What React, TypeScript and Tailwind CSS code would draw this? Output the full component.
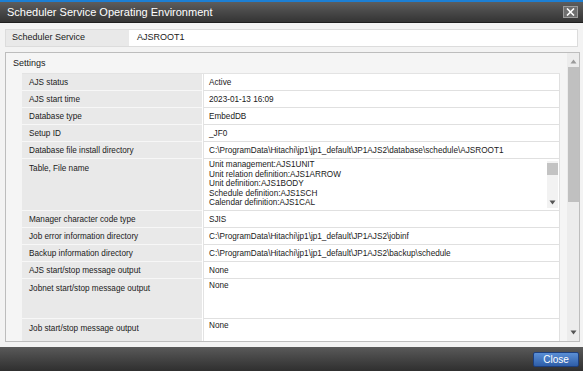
import React from 'react';

type Row = { label: string; value?: string; h: string; kind?: 'list' | 'tall' };

const rows: Row[] = [
  { label: 'AJS status', value: 'Active', h: 'h-[17px]' },
  { label: 'AJS start time', value: '2023-01-13 16:09', h: 'h-[17px]' },
  { label: 'Database type', value: 'EmbedDB', h: 'h-[17px]' },
  { label: 'Setup ID', value: '_JF0', h: 'h-[17px]' },
  {
    label: 'Database file install directory',
    value: 'C:\\ProgramData\\Hitachi\\jp1\\jp1_default\\JP1AJS2\\database\\schedule\\AJSROOT1',
    h: 'h-[17px]',
  },
  { label: 'Table, File name', h: 'h-[52px]', kind: 'list' },
  { label: 'Manager character code type', value: 'SJIS', h: 'h-[17px]' },
  {
    label: 'Job error information directory',
    value: 'C:\\ProgramData\\Hitachi\\jp1\\jp1_default\\JP1AJS2\\jobinf',
    h: 'h-[17px]',
  },
  {
    label: 'Backup information directory',
    value: 'C:\\ProgramData\\Hitachi\\jp1\\jp1_default\\JP1AJS2\\backup\\schedule',
    h: 'h-[17px]',
  },
  { label: 'AJS start/stop message output', value: 'None', h: 'h-[17px]' },
  { label: 'Jobnet start/stop message output', value: 'None', h: 'h-[40px]', kind: 'tall' },
  { label: 'Job start/stop message output', value: 'None', h: 'h-[40px]', kind: 'tall' },
];

const tableFiles = [
  'Unit management:AJS1UNIT',
  'Unit relation definition:AJS1ARROW',
  'Unit definition:AJS1BODY',
  'Schedule definition:AJS1SCH',
  'Calendar definition:AJS1CAL',
];

const Arrow = ({ up }: { up?: boolean }) => (
  <svg width="7" height="5" viewBox="0 0 7 5" className="shrink-0">
    {up ? <path d="M0.5 4.5 L3.5 0.5 L6.5 4.5 Z" fill="#9a9a9a" /> : <path d="M0.5 0.5 L3.5 4.5 L6.5 0.5 Z" fill="#555" />}
  </svg>
);

export default function App() {
  return (
    <div
      className="w-[583px] h-[371px] overflow-hidden flex flex-col bg-[#f3f3f3] text-[#1a1a1a]"
      style={{ fontFamily: '"Liberation Sans", Arial, sans-serif' }}
    >
      {/* title bar */}
      <div className="h-[23px] shrink-0 border-t-2 border-[#1c7fd4] border-b border-b-[#1e1e1e] bg-gradient-to-b from-[#5d5d5d] to-[#343434] flex items-center justify-between pl-[7px] pr-[5px]">
        <span className="text-white text-[11px] leading-none">Scheduler Service Operating Environment</span>
        <div className="w-[15px] h-[12px] bg-[#6e6e6e] border border-[#9b9b9b] flex items-center justify-center">
          <svg width="9" height="8" viewBox="0 0 9 8">
            <path d="M1 0.5 L8 7.5 M8 0.5 L1 7.5" stroke="#fff" strokeWidth="1.6" />
          </svg>
        </div>
      </div>

      <div className="px-[5px] pt-[6px] shrink-0">
        {/* scheduler service row */}
        <div className="h-[18px] w-[573px] flex border border-[#dcdcdc] bg-white text-[9px]">
          <div className="w-[123px] bg-[#e9e9e9] pl-[6px] flex items-center">Scheduler Service</div>
          <div className="pl-[8px] flex items-center">AJSROOT1</div>
        </div>

        {/* settings */}
        <div className="mt-[5px] h-[290px] w-[575px] border border-[#bdbdbd] bg-[#f5f5f5] flex">
          <div className="flex-1 overflow-hidden pl-[7px]">
            <div className="h-[20px] leading-[20px] text-[9px]">Settings</div>
            <div className="ml-[9px] w-[538px] border-t border-[#e3e3e3] text-[8.2px]">
              {rows.map((r) => (
                <div key={r.label} className={`flex ${r.h}`}>
                  <div
                    className={`w-[180px] shrink-0 bg-[#e9e9e9] border-b border-[#f7f7f7] pl-[7px] leading-[10px] ${
                      r.kind ? 'pt-[5px]' : 'pt-[4px]'
                    }`}
                  >
                    {r.label}
                  </div>
                  <div className="w-[1px] bg-white" />
                  <div className="flex-1 bg-white border-l border-[#e3e3e3] border-b border-b-[#e0e0e0] border-r border-r-[#e0e0e0] pl-[5px] leading-[10px]">
                    {r.kind === 'list' ? (
                      <div className="flex h-full">
                        <div className="flex-1 pt-[1px] leading-[9.6px]">
                          {tableFiles.map((t) => (
                            <div key={t}>{t}</div>
                          ))}
                        </div>
                        <div className="w-[11px] my-[2px] mr-[1px] bg-[#f2f2f2] flex flex-col items-center justify-between py-[3px]">
                          <Arrow up />
                          <div className="w-[11px] h-[12px] bg-[#c3c3c3] -mt-[6px]" />
                          <div className="flex-1" />
                          <Arrow />
                        </div>
                      </div>
                    ) : (
                      <div className={r.kind === 'tall' ? 'pt-[2px]' : 'pt-[4px]'}>{r.value}</div>
                    )}
                  </div>
                </div>
              ))}
            </div>
          </div>

          {/* outer scrollbar */}
          <div className="w-[12px] shrink-0 bg-[#ececec] flex flex-col items-center py-[6px]">
            <Arrow up />
            <div className="w-[11px] h-[135px] mt-[3px] bg-[#c0c0c0]" />
            <div className="flex-1" />
            <Arrow />
          </div>
        </div>
      </div>

      {/* footer */}
      <div className="mt-[5px] h-[24px] shrink-0 bg-gradient-to-b from-[#5a5a5a] to-[#2f2f2f] flex justify-end items-start pt-[5px] pr-[4px]">
        <button className="w-[46px] h-[15px] rounded-[2px] border border-[#1d3f7e] bg-gradient-to-b from-[#5b8fd6] to-[#2e5ea8] text-white text-[10px] leading-none flex items-center justify-center">
          Close
        </button>
      </div>
    </div>
  );
}
